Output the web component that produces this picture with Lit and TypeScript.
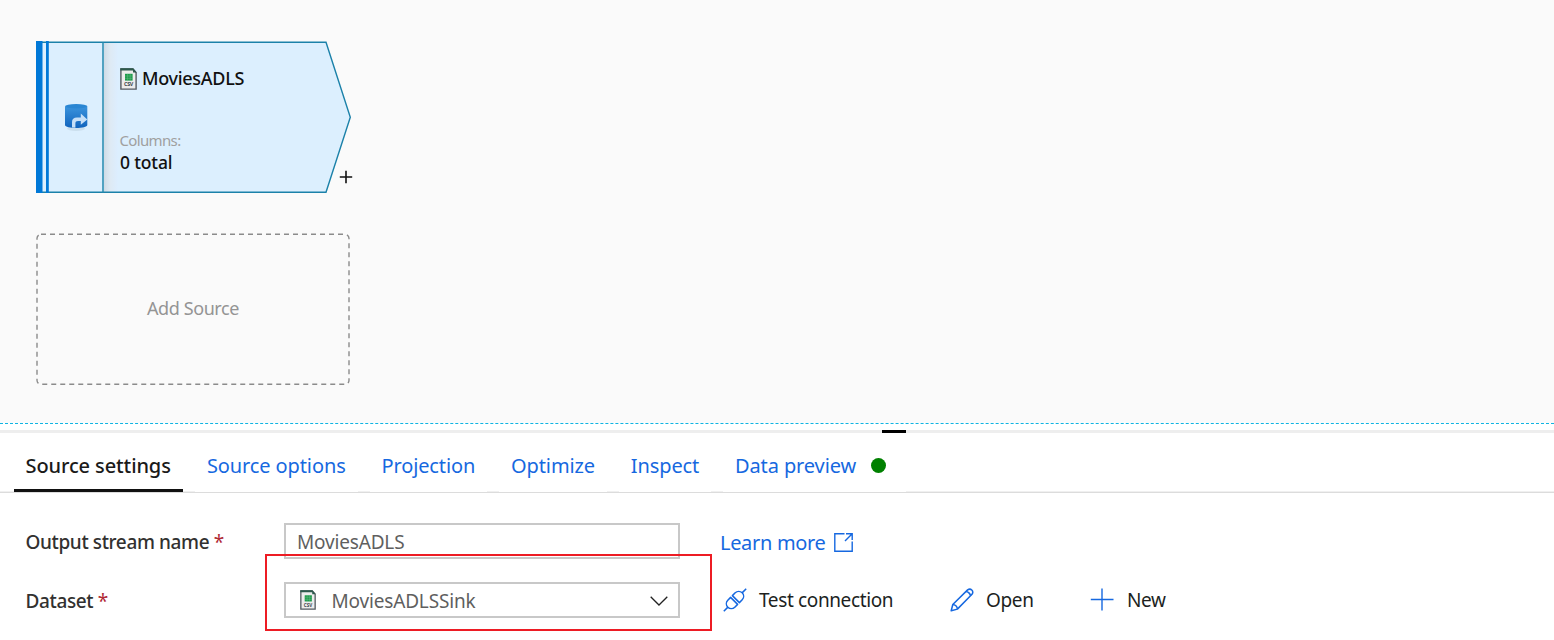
import { LitElement, html, css, svg } from "lit";
import { customElement } from "lit/decorators.js";

@customElement("csv-icon")
export class CsvIcon extends LitElement {
  static styles = css`
    :host { display: block; }
    svg { display: block; width: 100%; height: 100%; }
    text { font: 700 5.6px "Noto Sans", sans-serif; fill: #3d464b; }
  `;
  render() {
    return html`<svg viewBox="0 0 17 22" preserveAspectRatio="none">
      <path d="M.9 1H13L16.1 4.5V21.1H.9Z" fill="#ececec" stroke="#545b61" stroke-width="1.4" />
      <path d="M.3 .3H13.2L16.6 4.6H13V2.5H.3Z" fill="#2c594c" />
      <rect x="5" y="5.8" width="7.6" height="6.8" fill="#1c9a4a" />
      <path d="M5 8H12.6M5 10.3H12.6M7.6 5.8V12.6M10.2 5.8V12.6" stroke="#7cc596" stroke-width=".4" />
      <text x="4" y="18.3" textLength="9" lengthAdjust="spacingAndGlyphs">CSV</text>
    </svg>`;
  }
}

@customElement("flow-canvas")
export class FlowCanvas extends LitElement {
  static styles = css`
    :host { display: block; position: relative; height: 423px; background: #fafafa; }
    .source { position: absolute; left: 36px; top: 41px; width: 320px; height: 152px; }
    .shape { position: absolute; inset: 0; width: 320px; height: 152px; }
    .body { position: absolute; left: 84px; top: 25px; display: flex; flex-direction: column; color: #111; }
    .title { display: flex; align-items: center; gap: 5px; height: 24px; font-size: 18px; font-weight: 500; letter-spacing: -0.3px; }
    csv-icon { width: 17px; height: 22px; }
    .title csv-icon { margin-top: 2px; }
    .caption { margin-top: 39px; margin-left: -0.5px; height: 22px; line-height: 22px; font-size: 15px; color: #a0a0a0; letter-spacing: -0.65px; }
    .total { height: 22px; line-height: 22px; font-size: 17.5px; font-weight: 500; letter-spacing: -0.15px; }
    .add-step { position: absolute; left: 303px; top: 129px; width: 14px; height: 14px; }
    .add-source { position: absolute; left: 36px; top: 233px; width: 314px; height: 152px; display: grid; place-items: center; font-size: 18px; color: #949494; letter-spacing: -0.4px; }
    .outline { position: absolute; inset: 0; }
    .label { position: relative; padding-bottom: 2px; }
  `;
  render() {
    return html`
      <div class="source">
        <svg class="shape" viewBox="0 0 320 152">
          <defs>
            <linearGradient id="shade"><stop offset="0" stop-color="#cfdbe5" /><stop offset=".45" stop-color="#deeaf4" /><stop offset="1" stop-color="#dceeff" /></linearGradient>
            <linearGradient id="db" x2="0" y2="1"><stop offset="0" stop-color="#3b93dc" /><stop offset="1" stop-color="#1164bd" /></linearGradient>
          </defs>
          <path d="M1 1.2H290L314.3 76.2L290 151.2H1Z" fill="#dceffe" />
          <rect x="68" y="2" width="14" height="149" fill="url(#shade)" />
          <path d="M1 1.2H290L314.3 76.2L290 151.2H1Z" fill="none" stroke="#1b81a9" stroke-width="1.4" />
          <path d="M67 1V152" stroke="#2388ac" stroke-width="1.5" />
          <rect width="6.5" height="152" fill="#0078d7" />
          <rect x="10" width="2.8" height="152" fill="#0078d7" />
          <ellipse cx="40" cy="87.5" rx="9" ry="2.5" fill="#cbdfee" />
          <path d="M29 65.5V84C29 88 51.3 88 51.3 84V65.5Z" fill="url(#db)" />
          <ellipse cx="40.2" cy="65.3" rx="11.2" ry="2.2" fill="#2a86d3" />
          <path d="M36 86.6V81Q36 76.4 41 76.4H44.8V72.6L51.3 78.4L44.8 83.8V80H42Q39.4 80 39.4 82.4V86.8Z" fill="#c6dff7" />
        </svg>
        <div class="body">
          <div class="title"><csv-icon></csv-icon><span>MoviesADLS</span></div>
          <div class="caption">Columns:</div>
          <div class="total">0 total</div>
        </div>
        <svg class="add-step" viewBox="0 0 14 14"><path d="M7 .8V13.2M.8 7H13.2" stroke="#111" stroke-width="1.6" /></svg>
      </div>
      <div class="add-source">
        <svg class="outline" width="314" height="152"><rect x="1" y="1.3" width="312" height="150" rx="4" fill="none" stroke="#8b8b8b" stroke-width="1.4" stroke-dasharray="5 4" /></svg>
        <span class="label">Add Source</span>
      </div>`;
  }
}

const commandIcons: Record<string, unknown> = {
  plug: svg`<g fill="none" stroke="#1668e0" stroke-width="1.5" stroke-linejoin="round"><path d="M.8 23.2L4.9 19.1M19.1 4.9L23.2 .8" /><path d="M7.6 9.4L14.6 16.4L11.8 19.2A4.95 4.95 0 0 1 4.8 12.2Z" /><path d="M9.4 7.6L16.4 14.6L19.2 11.8A4.95 4.95 0 0 0 12.2 4.8Z" /></g>`,
  pencil: svg`<g fill="none" stroke="#1668e0" stroke-width="1.5" stroke-linejoin="round"><path d="M1.2 22.8L2.8 16.5L17.6 1.9C20.7-.3 24.2 3.1 22 6.3L7.4 21.1Z" /><path d="M2.8 16.5C5 16.5 7.4 18.5 7.4 21.1M16 3.5C18 3.6 20.3 5.7 20.5 7.8" /></g>`,
  plus: svg`<path d="M12 .5V22.5M.8 11.5H23.5" fill="none" stroke="#1668e0" stroke-width="1.4" />`,
};

@customElement("settings-panel")
export class SettingsPanel extends LitElement {
  static styles = css`
    :host { display: block; height: 217px; background: #fff; overflow: hidden; }
    .splitter { height: 7px; border-top: 1px dashed #10b4e2; box-sizing: border-box; }
    .grip { height: 3px; background: #eee; display: flex; padding-left: 882px; }
    .handle { width: 24px; background: #000; }
    .tabs { display: flex; height: 60px; padding-left: 14px; box-sizing: border-box; border-bottom: 1px solid #dcdcdc; gap: 12px; box-shadow: inset 0 -1px #f0f0f0; }
    .tab { display: flex; align-items: center; gap: 15px; height: 59px; padding: 8px 12px 0 11.8px; box-sizing: border-box; background: #fff; color: #1668e0; font-size: 20px; letter-spacing: -0.11px; white-space: nowrap; border-bottom: 3px solid #fff; }
    .tab:last-child { padding-right: 20px; }
    .tab.selected { color: #1b1a19; font-weight: 500; border-bottom-color: #111; padding-left: 11.5px; margin-right: 0.4px; }
    .status { width: 15px; height: 15px; border-radius: 50%; background: #008000; }
    .form { display: grid; grid-template-columns: 258px 396px auto; grid-template-rows: 36px 36px; row-gap: 23px; padding: 30px 0 0 26px; align-items: center; position: relative; }
    .name { padding-top: 2px; margin-left: -.5px; font-size: 19px; font-weight: 500; color: #323130; letter-spacing: -0.38px; }
    .required { color: #b02a35; font-weight: 400; }
    .field { display: flex; align-items: center; height: 36px; padding: 0 11px; box-sizing: border-box; border: 2px solid #c8c8c8; color: #5f5f5f; font-size: 19px; }
    csv-icon { width: 16px; height: 20px; margin: 0 15.5px 0 3px; }
    .value { flex: 1; padding-top: 2px; letter-spacing: -0.17px; }
    .chevron { width: 18px; height: 10px; margin: 2px -1px 0 0; }
    .learn { display: flex; align-items: center; gap: 8px; margin-left: 40px; padding-top: 2px; color: #1668e0; font-size: 20px; letter-spacing: -0.32px; }
    .commands { display: flex; align-items: center; margin-left: 43px; color: #201f1e; font-size: 19px; }
    .command { display: flex; align-items: center; gap: 12px; letter-spacing: -0.37px; }
    .command.test { width: 227px; }
    .command.open { width: 140px; letter-spacing: -0.35px; }
    .command.new { gap: 13px; letter-spacing: -0.4px; }
    .glyph { width: 24px; height: 24px; }
    .highlight { position: absolute; left: 265px; top: 61px; width: 447px; height: 77px; box-sizing: border-box; border: 2px solid #ed1c24; }
  `;
  private tabs = ["Source settings", "Source options", "Projection", "Optimize", "Inspect", "Data preview"];
  private command(kind: string, icon: string, text: string) {
    return html`<div class="command ${kind}"><svg class="glyph" viewBox="0 0 24 24">${commandIcons[icon]}</svg><span>${text}</span></div>`;
  }
  render() {
    return html`
      <div class="splitter"></div>
      <div class="grip"><div class="handle"></div></div>
      <div class="tabs">
        ${this.tabs.map((t, i) => html`<div class="tab ${i === 0 ? "selected" : ""}"><span>${t}</span>${i === 5 ? html`<i class="status"></i>` : ""}</div>`)}
      </div>
      <div class="form">
        <div class="name">Output stream name <span class="required">*</span></div>
        <div class="field"><span class="value">MoviesADLS</span></div>
        <div class="learn"><span>Learn more</span><svg width="19" height="19" viewBox="0 0 19 19"><path d="M10.5 .8H.8V18.2H18.2V8.5M12 .8H18.2V7M18.2 .8L11 8" fill="none" stroke="#1668e0" stroke-width="1.4" /></svg></div>
        <div class="name">Dataset <span class="required">*</span></div>
        <div class="field"><csv-icon></csv-icon><span class="value">MoviesADLSSink</span><svg class="chevron" viewBox="0 0 18 10"><path d="M.7 .7L9 9L17.3 .7" fill="none" stroke="#222" stroke-width="1.3" /></svg></div>
        <div class="commands">${this.command("test", "plug", "Test connection")}${this.command("open", "pencil", "Open")}${this.command("new", "plus", "New")}</div>
        <div class="highlight"></div>
      </div>`;
  }
}

@customElement("app-root")
export class AppRoot extends LitElement {
  static styles = css`
    :host { display: block; width: 1554px; height: 640px; overflow: hidden; background: #fff; font-family: "Noto Sans", "Open Sans", sans-serif; }
  `;
  render() {
    return html`<flow-canvas></flow-canvas><settings-panel></settings-panel>`;
  }
}
